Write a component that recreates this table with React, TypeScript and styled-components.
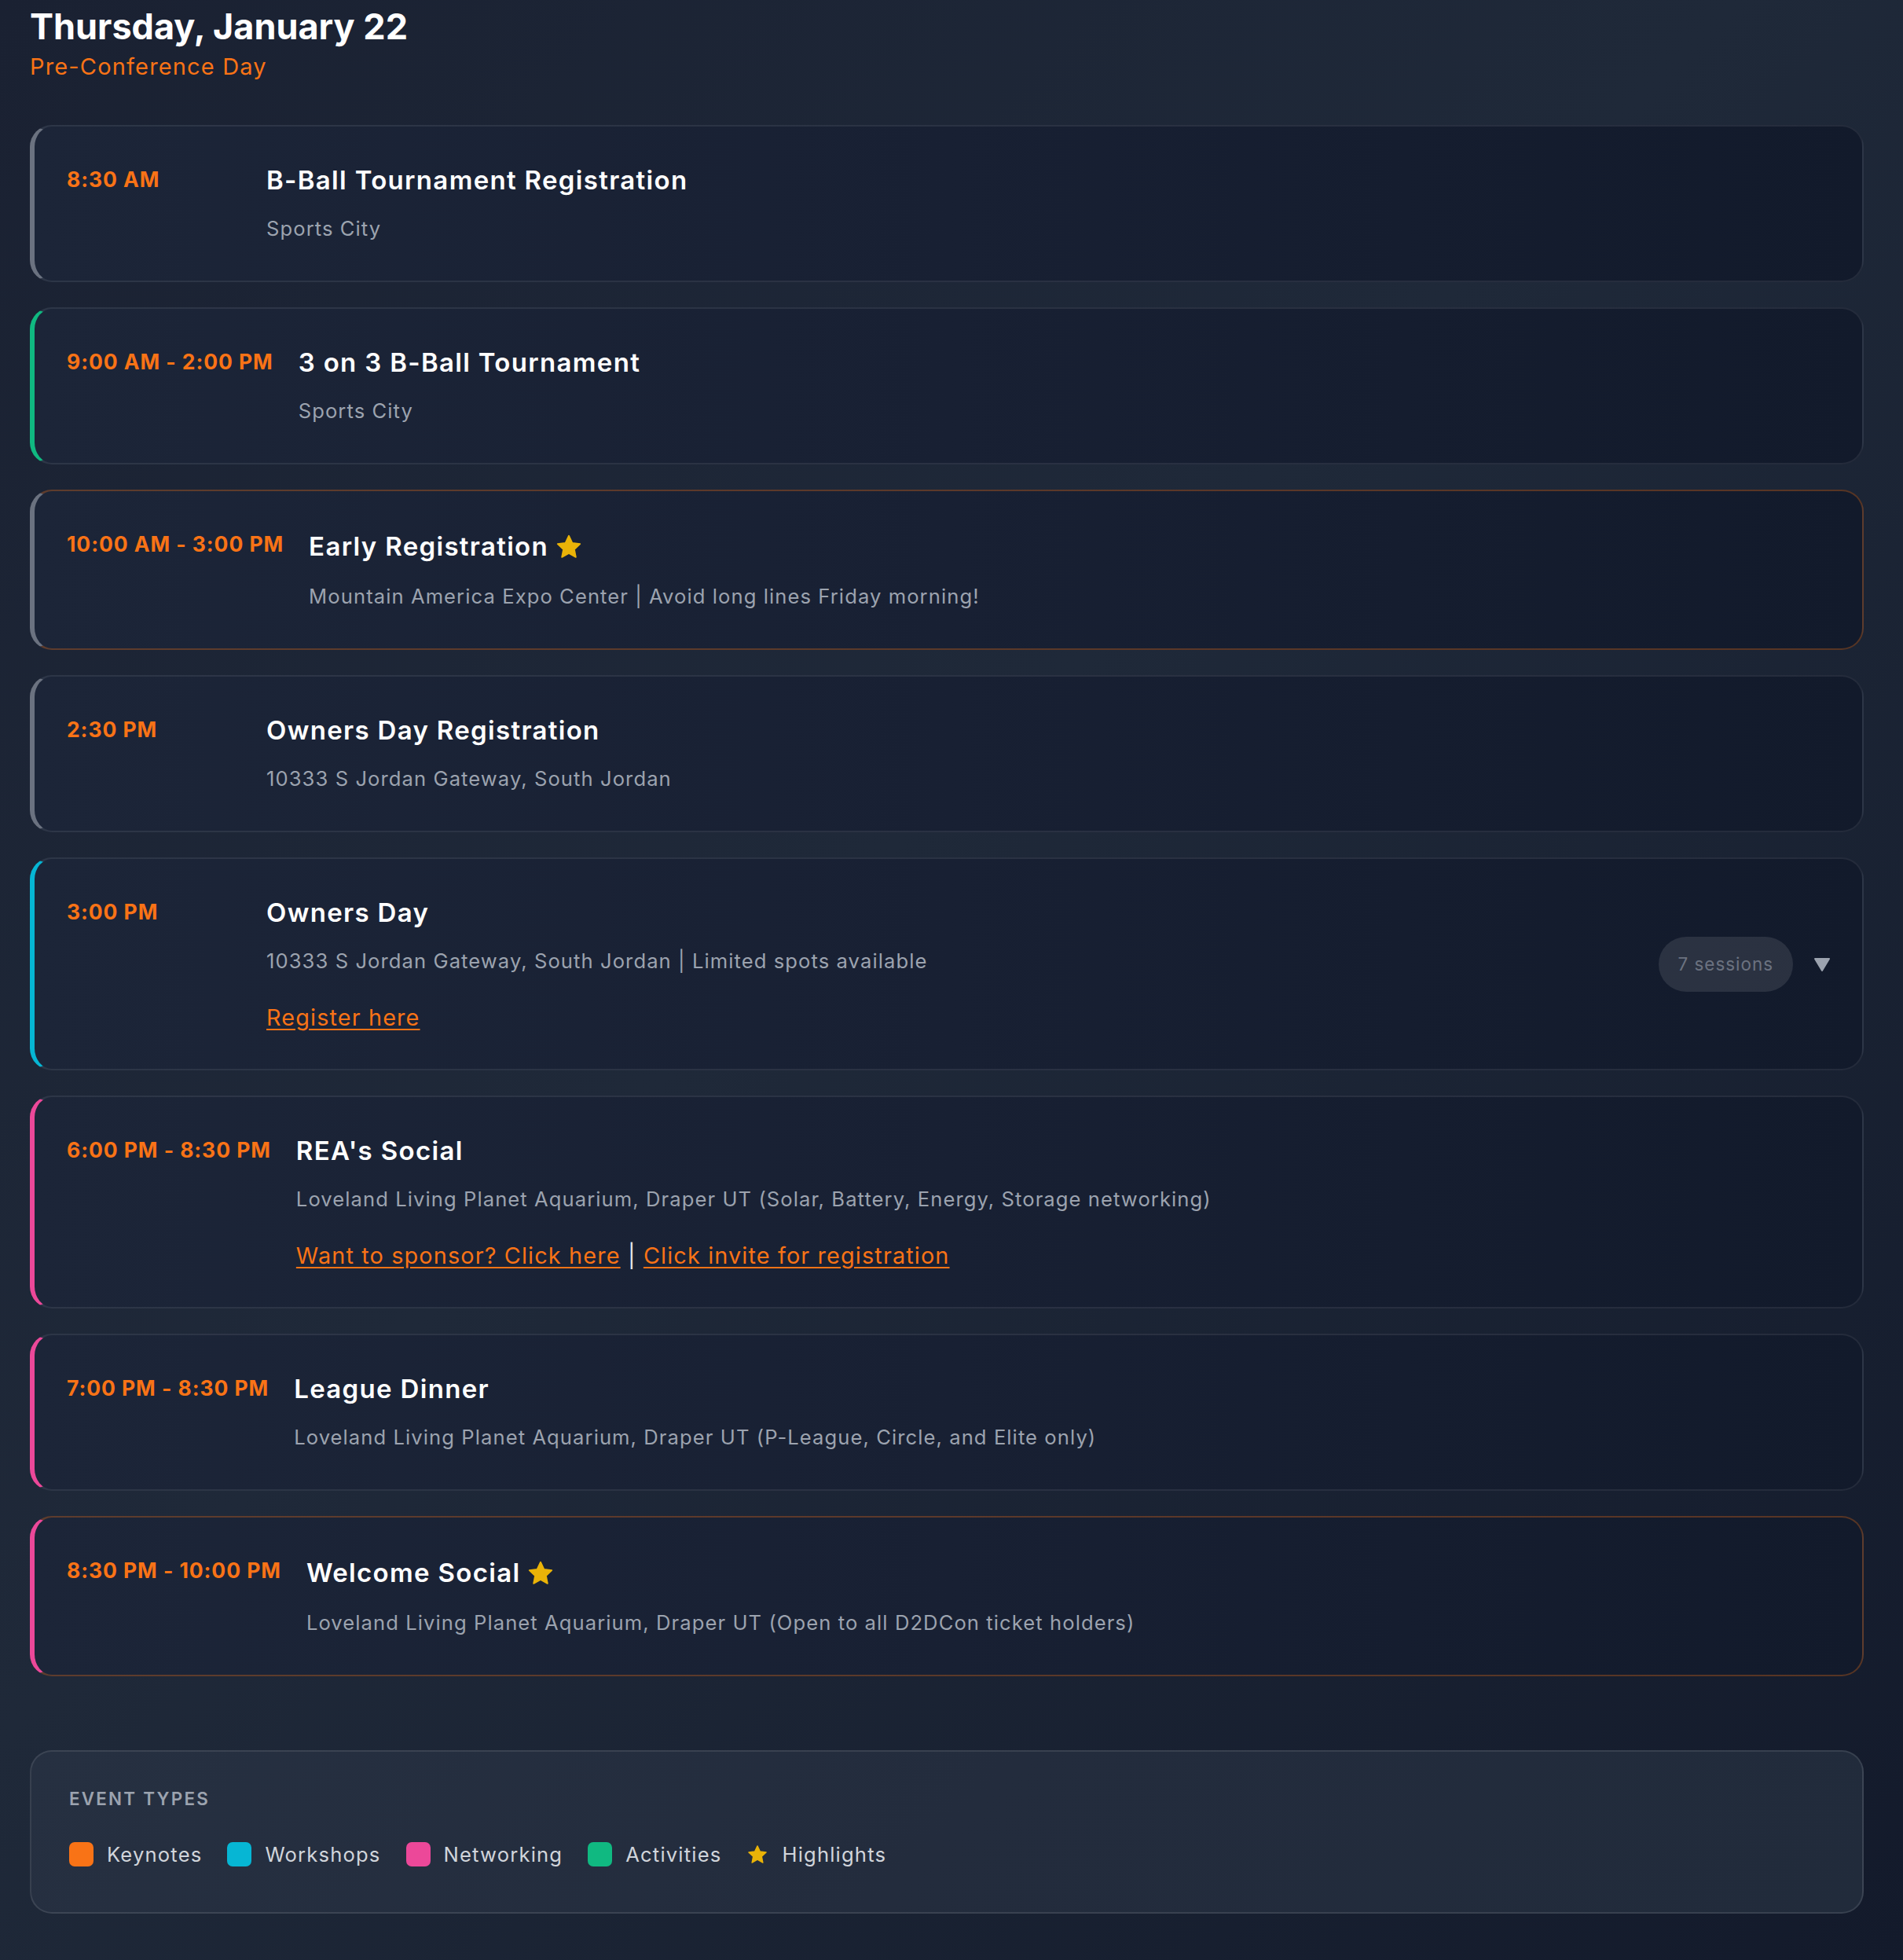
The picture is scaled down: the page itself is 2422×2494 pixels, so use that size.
import styled, { createGlobalStyle } from "styled-components";

type Kind = "plain" | "activity" | "workshop" | "networking";

interface Link {
  label: string;
}

interface EventItem {
  time: string;
  title: string;
  place: string;
  kind: Kind;
  star?: boolean;
  links?: Link[];
  sessions?: number;
}

const kindColor: Record<Kind, string> = {
  plain: "#6b7280",
  activity: "#10b981",
  workshop: "#06b6d4",
  networking: "#ec4899",
};

const events: EventItem[] = [
  { time: "8:30 AM", title: "B-Ball Tournament Registration", place: "Sports City", kind: "plain" },
  { time: "9:00 AM - 2:00 PM", title: "3 on 3 B-Ball Tournament", place: "Sports City", kind: "activity" },
  {
    time: "10:00 AM - 3:00 PM",
    title: "Early Registration",
    place: "Mountain America Expo Center | Avoid long lines Friday morning!",
    kind: "plain",
    star: true,
  },
  { time: "2:30 PM", title: "Owners Day Registration", place: "10333 S Jordan Gateway, South Jordan", kind: "plain" },
  {
    time: "3:00 PM",
    title: "Owners Day",
    place: "10333 S Jordan Gateway, South Jordan | Limited spots available",
    kind: "workshop",
    links: [{ label: "Register here" }],
    sessions: 7,
  },
  {
    time: "6:00 PM - 8:30 PM",
    title: "REA's Social",
    place: "Loveland Living Planet Aquarium, Draper UT (Solar, Battery, Energy, Storage networking)",
    kind: "networking",
    links: [{ label: "Want to sponsor? Click here" }, { label: "Click invite for registration" }],
  },
  {
    time: "7:00 PM - 8:30 PM",
    title: "League Dinner",
    place: "Loveland Living Planet Aquarium, Draper UT (P-League, Circle, and Elite only)",
    kind: "networking",
  },
  {
    time: "8:30 PM - 10:00 PM",
    title: "Welcome Social",
    place: "Loveland Living Planet Aquarium, Draper UT (Open to all D2DCon ticket holders)",
    kind: "networking",
    star: true,
  },
];

const legend = [
  { label: "Keynotes", color: "#f97316" },
  { label: "Workshops", color: "#06b6d4" },
  { label: "Networking", color: "#ec4899" },
  { label: "Activities", color: "#10b981" },
];

const GlobalStyle = createGlobalStyle`
  html, body {
    margin: 0;
    padding: 0;
  }
  body {
    font-family: Inter, "Noto Sans", "Liberation Sans", sans-serif;
    background: linear-gradient(135deg, #1a2132 0%, #1f2939 45%, #131a2b 100%);
    min-height: 2494px;
    color: #f8fafc;
  }
`;

const Star = ({ size }: { size: number }) => (
  <svg width={size} height={size} viewBox="0 0 24 24">
    <path
      d="M12 2.5l2.9 6.1 6.6.8-4.9 4.6 1.3 6.6L12 17.3l-5.9 3.3 1.3-6.6-4.9-4.6 6.6-.8z"
      fill="#eab308"
      stroke="#eab308"
      strokeWidth="1.2"
      strokeLinejoin="round"
    />
  </svg>
);

const Caret = () => (
  <svg width="22" height="22" viewBox="0 0 22 22">
    <path d="M2 4h18L11 19z" fill="#9ca3af" stroke="#9ca3af" strokeWidth="2" strokeLinejoin="round" />
  </svg>
);

export default function App() {
  return (
    <Page>
      <GlobalStyle />
      <DayHeader>
        <DayTitle>Thursday, January 22</DayTitle>
        <DaySub>Pre-Conference Day</DaySub>
      </DayHeader>

      <EventList>
        {events.map((ev) => (
          <Card key={ev.title} $accent={kindColor[ev.kind]} $highlight={!!ev.star}>
            <Time>{ev.time}</Time>
            <Body>
              <Title>
                {ev.title}
                {ev.star && (
                  <TitleStar>
                    <Star size={36} />
                  </TitleStar>
                )}
              </Title>
              <Place>{ev.place}</Place>
              {ev.links && (
                <Links>
                  {ev.links.map((l, i) => (
                    <span key={l.label}>
                      {i > 0 && <Sep> | </Sep>}
                      <A href="#">{l.label}</A>
                    </span>
                  ))}
                </Links>
              )}
            </Body>
            {ev.sessions && (
              <Aside>
                <Pill>{ev.sessions} sessions</Pill>
                <Caret />
              </Aside>
            )}
          </Card>
        ))}
      </EventList>

      <Legend>
        <LegendTitle>Event Types</LegendTitle>
        <LegendRow>
          {legend.map((l) => (
            <LegendItem key={l.label}>
              <Swatch $color={l.color} />
              {l.label}
            </LegendItem>
          ))}
          <LegendItem>
            <Star size={28} />
            Highlights
          </LegendItem>
        </LegendRow>
      </Legend>
    </Page>
  );
}

const Page = styled.div`
  padding: 7px 50px 60px 38px;
`;

const DayHeader = styled.div`
  margin-bottom: 55px;
`;

const DayTitle = styled.h1`
  margin: 0;
  font-size: 45px;
  line-height: 54px;
  font-weight: 700;
  color: #ffffff;
`;

const DaySub = styled.div`
  margin-top: 5px;
  font-size: 29px;
  line-height: 38px;
  letter-spacing: 0.04em;
  color: #f97316;
`;

const EventList = styled.div`
  display: flex;
  flex-direction: column;
  gap: 32px;
`;

const Card = styled.div<{ $accent: string; $highlight: boolean }>`
  display: flex;
  align-items: flex-start;
  padding: 47px 40px 47px 41px;
  border: 2px solid
    ${(p) => (p.$highlight ? "rgba(249, 115, 22, 0.3)" : "rgba(255, 255, 255, 0.08)")};
  border-left: 6px solid ${(p) => p.$accent};
  border-radius: 28px;
  background: linear-gradient(90deg, #1c2538 0%, #182033 50%, #121a2b 100%);
`;

const Time = styled.div`
  flex-shrink: 0;
  min-width: 222px;
  margin-right: 32px;
  padding-top: 4px;
  white-space: nowrap;
  font-size: 26.5px;
  line-height: 33px;
  font-weight: 700;
  letter-spacing: 0.035em;
  color: #f97316;
`;

const Body = styled.div`
  flex: 1;
  min-width: 0;
`;

const Title = styled.div`
  display: flex;
  align-items: center;
  gap: 8px;
  font-size: 33px;
  line-height: 43px;
  font-weight: 600;
  letter-spacing: 0.04em;
  color: #ffffff;
`;

const TitleStar = styled.span`
  display: inline-flex;
  align-items: center;
  height: 47px;
`;

const Place = styled.div`
  margin-top: 21px;
  font-size: 25.6px;
  line-height: 38px;
  letter-spacing: 0.042em;
  color: #9ca3af;
`;

const Links = styled.div`
  margin-top: 34px;
  font-size: 28.8px;
  line-height: 37px;
  letter-spacing: 0.04em;
  color: #ffffff;
`;

const A = styled.a`
  color: #f97316;
  text-decoration: underline;
  text-underline-offset: 4px;
`;

const Sep = styled.span`
  color: #e5e7eb;
`;

const Aside = styled.div`
  align-self: center;
  display: flex;
  align-items: center;
  gap: 26px;
  margin-left: auto;
`;

const Pill = styled.div`
  padding: 0 25px;
  height: 70px;
  display: flex;
  align-items: center;
  border-radius: 35px;
  background: rgba(255, 255, 255, 0.1);
  font-size: 22.4px;
  letter-spacing: 0.045em;
  color: #6b7280;
`;

const Legend = styled.div`
  margin-top: 94px;
  padding: 45px 48px 57px;
  border: 2px solid rgba(255, 255, 255, 0.1);
  border-radius: 28px;
  background: linear-gradient(135deg, #263041 0%, #232c3d 50%, #212b3b 100%);
`;

const LegendTitle = styled.div`
  font-size: 22.4px;
  line-height: 29px;
  font-weight: 600;
  letter-spacing: 0.1em;
  text-transform: uppercase;
  color: #9ca3af;
`;

const LegendRow = styled.div`
  margin-top: 40px;
  display: flex;
  align-items: center;
  gap: 32px;
`;

const LegendItem = styled.div`
  display: flex;
  align-items: center;
  gap: 17px;
  font-size: 25.6px;
  line-height: 33px;
  letter-spacing: 0.046em;
  color: #d1d5db;
`;

const Swatch = styled.span<{ $color: string }>`
  width: 31px;
  height: 31px;
  border-radius: 7px;
  background: ${(p) => p.$color};
`;
